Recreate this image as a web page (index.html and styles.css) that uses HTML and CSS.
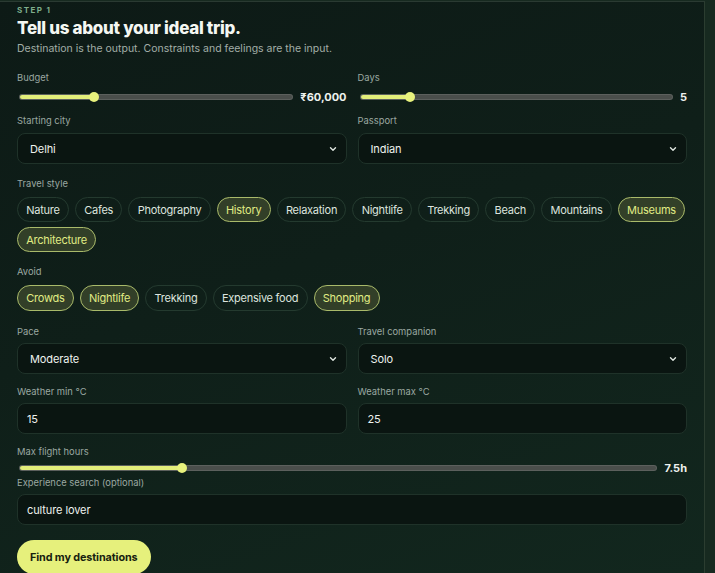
FILE: index.html
```html
<!DOCTYPE html>
<html lang="en">
    <head>
        <meta name="viewport" content="width=device-width, initial-scale=1">
        <link rel="stylesheet" href="styles.css">
        <title>Plan a trip</title>
    </head>
    <body>
        <div class="card">
            <div class="step">STEP 1</div>
            <h1>Tell us about your ideal trip.</h1>
            <p class="lead">Destination is the output. Constraints and feelings are the input.</p>

            <div class="row row-sliders">
                <div class="field">
                    <label>Budget</label>
                    <div class="slider">
                        <div class="track"><div class="fill" style="width: 27%"></div></div>
                        <span class="value">₹60,000</span>
                    </div>
                </div>
                <div class="field">
                    <label>Days</label>
                    <div class="slider">
                        <div class="track"><div class="fill" style="width: 16%"></div></div>
                        <span class="value">5</span>
                    </div>
                </div>
            </div>

            <div class="row row-city">
                <div class="field">
                    <label>Starting city</label>
                    <div class="select">Delhi<svg viewBox="0 0 10 10"><path d="M2.5 3.8 5 6.3 7.5 3.8"/></svg></div>
                </div>
                <div class="field">
                    <label>Passport</label>
                    <div class="select">Indian<svg viewBox="0 0 10 10"><path d="M2.5 3.8 5 6.3 7.5 3.8"/></svg></div>
                </div>
            </div>

            <div class="group group-style">
                <label>Travel style</label>
                <div class="chips">
                    <span class="chip">Nature</span>
                    <span class="chip">Cafes</span>
                    <span class="chip">Photography</span>
                    <span class="chip on">History</span>
                    <span class="chip">Relaxation</span>
                    <span class="chip">Nightlife</span>
                    <span class="chip">Trekking</span>
                    <span class="chip">Beach</span>
                    <span class="chip">Mountains</span>
                    <span class="chip on">Museums</span>
                    <span class="chip on">Architecture</span>
                </div>
            </div>

            <div class="group group-avoid">
                <label>Avoid</label>
                <div class="chips">
                    <span class="chip on">Crowds</span>
                    <span class="chip on">Nightlife</span>
                    <span class="chip">Trekking</span>
                    <span class="chip">Expensive food</span>
                    <span class="chip on">Shopping</span>
                </div>
            </div>

            <div class="row row-pace">
                <div class="field">
                    <label>Pace</label>
                    <div class="select">Moderate<svg viewBox="0 0 10 10"><path d="M2.5 3.8 5 6.3 7.5 3.8"/></svg></div>
                </div>
                <div class="field">
                    <label>Travel companion</label>
                    <div class="select">Solo<svg viewBox="0 0 10 10"><path d="M2.5 3.8 5 6.3 7.5 3.8"/></svg></div>
                </div>
            </div>

            <div class="row row-weather">
                <div class="field">
                    <label>Weather min °C</label>
                    <div class="input">15</div>
                </div>
                <div class="field">
                    <label>Weather max °C</label>
                    <div class="input">25</div>
                </div>
            </div>

            <div class="group group-flight">
                <label>Max flight hours</label>
                <div class="slider">
                    <div class="track"><div class="fill" style="width: 25.4%"></div></div>
                    <span class="value">7.5h</span>
                </div>
            </div>

            <div class="group group-search">
                <label>Experience search (optional)</label>
                <div class="input">culture lover</div>
            </div>

            <button type="submit">Find my destinations</button>
        </div>
    </body>
</html>
```

FILE: styles.css
```css
html,
body {
    margin: 0;
    height: 100%;
    background: #172a20;
}

body {
    color: #e8eee9;
    font-family: Inter, "Noto Sans", sans-serif;
    overflow: hidden;
}

.card {
    box-sizing: border-box;
    width: 705px;
    min-height: 573px;
    margin-top: 1px;
    padding: 3px 17px 0;
    background: linear-gradient(160deg, #0d1a16 0%, #0f1f19 45%, #12271e 100%);
    border-top: 1px solid #2a3a32;
    border-right: 1px solid #2b3d30;
}

.step {
    color: #7fae8c;
    font-size: 8px;
    font-weight: 700;
    letter-spacing: 1.4px;
    line-height: 10px;
}

h1 {
    margin: 2px 0 0;
    color: #f4f7f2;
    font-size: 17px;
    font-weight: 800;
    letter-spacing: -0.3px;
    line-height: 22px;
}

.lead {
    margin: 2px 0 0;
    color: #a2aea7;
    font-size: 10.5px;
    line-height: 16px;
}

label {
    display: block;
    color: #9ba8a1;
    font-size: 9.4px;
    line-height: 14px;
}

.row {
    display: grid;
    grid-template-columns: 1fr 1fr;
    column-gap: 11px;
}

.row-sliders { margin-top: 14px; }
.row-city { margin-top: 9px; }
.group-style { margin-top: 13px; }
.group-avoid { margin-top: 13px; }
.row-pace { margin-top: 14px; }
.row-weather { margin-top: 11px; }
.group-flight { margin-top: 11px; }
.group-search { margin-top: 2px; }

/* sliders */
.slider {
    display: flex;
    align-items: center;
    height: 16px;
    margin-top: 4px;
    padding-left: 3px;
}

.group-flight .slider {
    height: 12px;
    margin-top: 3px;
}

.track {
    flex: 1;
    position: relative;
    height: 4px;
    border-radius: 3px;
    background: #4a4e4b;
    box-shadow: 0 0 0 1px #5c605d;
}

.fill {
    position: relative;
    height: 100%;
    border-radius: 3px;
    background: #e3ee7a;
}

.fill::after {
    content: "";
    position: absolute;
    right: -5px;
    top: -3px;
    width: 10px;
    height: 10px;
    border-radius: 50%;
    background: #e8f27d;
}

.value {
    margin-left: 8px;
    color: #eef2ee;
    font-size: 11px;
    font-weight: 700;
}

/* selects and inputs */
.select,
.input {
    box-sizing: border-box;
    display: flex;
    align-items: center;
    height: 31px;
    margin-top: 5px;
    padding: 0 8px 0 12px;
    border: 1px solid #1f3229;
    border-radius: 8px;
    background: #0a1511;
    color: #eef2ee;
    font-size: 11px;
    letter-spacing: -0.1px;
}

.row-pace .select,
.row-weather .input,
.group-search .input {
    margin-top: 4px;
}

.input {
    padding-left: 9px;
}

.select svg {
    width: 10px;
    height: 10px;
    margin-left: auto;
    fill: none;
    stroke: #dfe6e1;
    stroke-width: 1.4;
    stroke-linecap: round;
    stroke-linejoin: round;
}

/* chips */
.chips {
    display: flex;
    flex-wrap: wrap;
    gap: 5px 6px;
    margin-top: 6px;
}

.chip {
    box-sizing: border-box;
    display: inline-flex;
    align-items: center;
    height: 25px;
    padding: 0 8.25px;
    border: 1px solid #243a2f;
    border-radius: 13px;
    color: #dde4df;
    font-size: 11px;
    letter-spacing: -0.25px;
}

.chip.on {
    border-color: #a9ba6a;
    background: #323f28;
    color: #e0ec84;
}

.group-avoid .chip {
    height: 26px;
}

button[type=submit] {
    display: block;
    height: 34px;
    margin-top: 15px;
    padding: 0 13px;
    border: 0;
    border-radius: 17px;
    background: #e6f07c;
    color: #17210f;
    font-family: inherit;
    font-size: 10.8px;
    font-weight: 700;
    letter-spacing: -0.1px;
    cursor: pointer;
}
```
